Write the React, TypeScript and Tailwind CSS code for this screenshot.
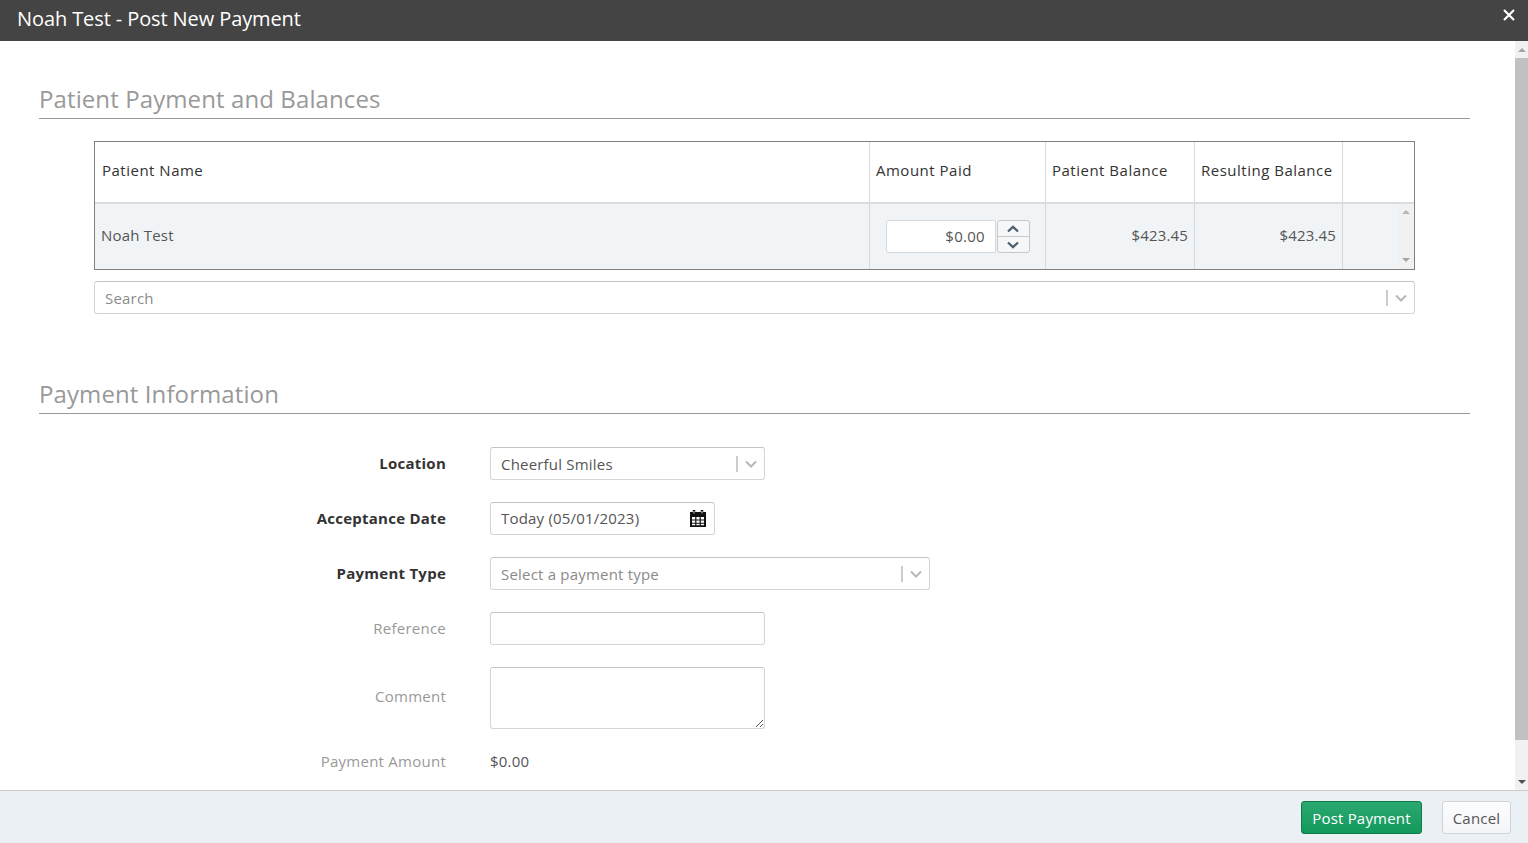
import React from "react";

const Chevron = ({ className = "" }: { className?: string }) => (
  <svg width="12" height="8" viewBox="0 0 12 8" fill="none" className={className}>
    <path d="M1 1.5 L6 6.5 L11 1.5" stroke="#b4b8bd" strokeWidth="2" />
  </svg>
);

const SelectBox = ({ text, placeholder, widthClass }: { text: string; placeholder?: boolean; widthClass: string }) => (
  <div className={`${widthClass} h-[33px] flex items-center bg-white border border-[#d5d5d5] border-t-[#c4c4c4] rounded-[3px] pl-[10px] pr-[7px]`}>
    <span className={`flex-1 text-[15px] tracking-[0.2px] leading-[33px] pt-[2px] ${placeholder ? "text-[#8a8a8a]" : "text-[#555555]"}`}>{text}</span>
    <span className="w-[2px] h-[16px] bg-[#cccccc] mr-[7px]" />
    <Chevron />
  </div>
);

const Heading = ({ children }: { children: React.ReactNode }) => (
  <div className="border-b border-[#999999] h-[37px] text-[24px] leading-[33px] tracking-[0.1px] text-[#999999]">{children}</div>
);

const Row = ({ label, bold, children, rowClass = "h-[33px]", labelClass = "" }: { label: string; bold?: boolean; children: React.ReactNode; rowClass?: string; labelClass?: string }) => (
  <div className={`flex items-center ${rowClass}`}>
    <div className={`w-[407px] text-right text-[15px] tracking-[0.25px] ${labelClass} ${bold ? "font-bold text-[#333333]" : "text-[#999999]"}`}>{label}</div>
    <div className="ml-[44px]">{children}</div>
  </div>
);

const Th = ({ className, children }: { className: string; children?: React.ReactNode }) => (
  <div className={`${className} h-full flex items-center pb-[3px] border-r border-[#d8d8d8] text-[15px] tracking-[0.5px] text-[#333333] font-medium`}>{children}</div>
);

const Td = ({ className, children }: { className: string; children?: React.ReactNode }) => (
  <div className={`${className} h-full flex items-center justify-end pr-[6px] pb-[2px] border-r border-[#d8d8d8] text-[15px] tracking-[0.15px] text-[#555555]`}>{children}</div>
);

export default function App() {
  return (
    <div className="w-[1528px] h-[843px] flex flex-col overflow-hidden bg-white" style={{ fontFamily: '"Open Sans", sans-serif' }}>
      <header className="h-[41px] shrink-0 bg-[#444444] flex items-center justify-between pl-[17px] pr-[13px]">
        <span className="text-[20px] text-white leading-[38px] tracking-[-0.1px] pb-[4px]">Noah Test - Post New Payment</span>
        <svg width="12" height="12" viewBox="0 0 12 12" className="mb-[11px]">
          <path d="M1 1 L11 11 M11 1 L1 11" stroke="#ffffff" strokeWidth="2.2" />
        </svg>
      </header>

      <div className="flex-1 flex min-h-0">
        <main className="flex-1 pl-[39px] pr-[45px] pt-[41px] overflow-hidden">
          <Heading>Patient Payment and Balances</Heading>

          <div className="mx-[55px] mt-[22px]">
            <div className="border border-[#808080] h-[129px] flex flex-col">
              <div className="h-[62px] flex items-center border-b-2 border-[#d8dde2]">
                <Th className="w-[775px] pl-[7px]">Patient Name</Th>
                <Th className="w-[176px] pl-[6px]">Amount Paid</Th>
                <Th className="w-[149px] pl-[6px]">Patient Balance</Th>
                <Th className="w-[148px] pl-[6px]">Resulting Balance</Th>
                <div className="flex-1" />
              </div>
              <div className="flex-1 flex items-center bg-[#f0f4f7]">
                <div className="w-[775px] h-full flex items-center pl-[6px] pb-[2px] border-r border-[#d8d8d8] text-[15px] tracking-[0.2px] text-[#555555]">Noah Test</div>
                <div className="w-[176px] h-full flex items-center pl-[16px] border-r border-[#d8d8d8]">
                  <div className="w-[110px] h-[33px] bg-white border border-[#d8d8d8] rounded-l-[3px] flex items-center justify-end pr-[10px] text-[15px] tracking-[0.3px] text-[#555555]">$0.00</div>
                  <div className="ml-[1px] w-[33px] h-[33px] border border-[#c8c8c8] rounded-[3px] bg-[#f5f7f9] flex flex-col">
                    <div className="flex-1 flex items-center justify-center pr-[1px] border-b border-[#c8c8c8]">
                      <svg width="12" height="8" viewBox="0 0 12 8" fill="none"><path d="M1 6.5 L6 1.8 L11 6.5" stroke="#4f6070" strokeWidth="2.3" /></svg>
                    </div>
                    <div className="flex-1 flex items-center justify-center pr-[1px]">
                      <svg width="12" height="8" viewBox="0 0 12 8" fill="none"><path d="M1 1.5 L6 6.2 L11 1.5" stroke="#4f6070" strokeWidth="2.3" /></svg>
                    </div>
                  </div>
                </div>
                <Td className="w-[149px]">$423.45</Td>
                <Td className="w-[148px]">$423.45</Td>
                <div className="flex-1 h-full flex justify-end">
                  <div className="w-[16px] h-full bg-[#f1f1f1] flex flex-col items-center justify-between pt-[6px] pb-[7px] pr-[1px]">
                    <div className="w-0 h-0 border-x-[4px] border-x-transparent border-b-[4px] border-b-[#b5b5b5]" />
                    <div className="w-0 h-0 border-x-[4px] border-x-transparent border-t-[4px] border-t-[#a5a5a5]" />
                  </div>
                </div>
              </div>
            </div>
            <div className="mt-[11px]">
              <SelectBox text="Search" placeholder widthClass="w-full" />
            </div>
          </div>

          <div className="mt-[63px]">
            <Heading>Payment Information</Heading>
          </div>

          <div className="mt-[33px] flex flex-col gap-[22px]">
            <Row label="Location" bold>
              <SelectBox text="Cheerful Smiles" widthClass="w-[275px]" />
            </Row>
            <Row label="Acceptance Date" bold>
              <div className="w-[225px] h-[33px] flex items-center justify-between bg-white border border-[#d5d5d5] border-t-[#c4c4c4] rounded-[3px] pl-[10px] pr-[8px] text-[15px] tracking-[0.2px] text-[#555555]">
                <span>Today (05/01/2023)</span>
                <svg width="16" height="17" viewBox="0 0 16 17" className="mb-[1px]">
                  <path fillRule="evenodd" fill="#111111" d="M0 2h2.8V0h2.4v2h5.6V0h2.4v2H16v15H0zM3.6 1v2.6h.8V1zM11.6 1v2.6h.8V1zM2 7v2.4h3.2V7zM6.4 7v2.4h3.2V7zM10.8 7v2.4H14V7zM2 10.6v2.1h3.2v-2.1zM6.4 10.6v2.1h3.2v-2.1zM10.8 10.6v2.1H14v-2.1zM2 13.7v1.6h3.2v-1.6zM6.4 13.7v1.6h3.2v-1.6zM10.8 13.7v1.6H14v-1.6z" />
                </svg>
              </div>
            </Row>
            <Row label="Payment Type" bold>
              <SelectBox text="Select a payment type" placeholder widthClass="w-[440px]" />
            </Row>
            <Row label="Reference">
              <div className="w-[275px] h-[33px] bg-white border border-[#d5d5d5] border-t-[#c4c4c4] rounded-[3px]" />
            </Row>
            <Row label="Comment" rowClass="h-[62px]" labelClass="pb-[3px]">
              <div className="relative w-[275px] h-[62px] bg-white border border-[#d5d5d5] border-t-[#c4c4c4] rounded-[3px]">
                <svg width="9" height="9" viewBox="0 0 9 9" className="absolute right-0 bottom-0">
                  <path d="M1 8 L8 1 M5 8 L8 5" stroke="#555555" strokeWidth="1" />
                </svg>
              </div>
            </Row>
            <Row label="Payment Amount" rowClass="h-[20px]">
              <span className="text-[15px] tracking-[0.2px] text-[#555555]">$0.00</span>
            </Row>
          </div>
        </main>

        <aside className="w-[13px] shrink-0 bg-[#f1f1f1] flex flex-col items-center">
          <div className="h-[17px] flex items-center justify-center">
            <div className="w-0 h-0 border-x-[4px] border-x-transparent border-b-[4px] border-b-[#a3a3a3]" />
          </div>
          <div className="w-full h-[682px] bg-[#c1c1c1]" />
          <div className="flex-1" />
          <div className="h-[17px] flex items-center justify-center">
            <div className="w-0 h-0 border-x-[4px] border-x-transparent border-t-[4px] border-t-[#505050]" />
          </div>
        </aside>
      </div>

      <footer className="h-[53px] shrink-0 bg-[#ebf0f5] border-t border-[#cccccc] flex items-center justify-end pr-[17px] gap-[20px]">
        <button className="w-[121px] h-[33px] pt-[2px] rounded-[3px] bg-gradient-to-b from-[#2aa771] to-[#119a5c] border border-[#0f7a4b] text-white text-[15px] tracking-[0.2px]">Post Payment</button>
        <button className="w-[69px] h-[33px] pt-[2px] rounded-[3px] bg-gradient-to-b from-[#fdfdfe] to-[#f3f5f8] border border-[#d0d3d8] text-[#555555] text-[15px] tracking-[0.2px]">Cancel</button>
      </footer>
    </div>
  );
}
